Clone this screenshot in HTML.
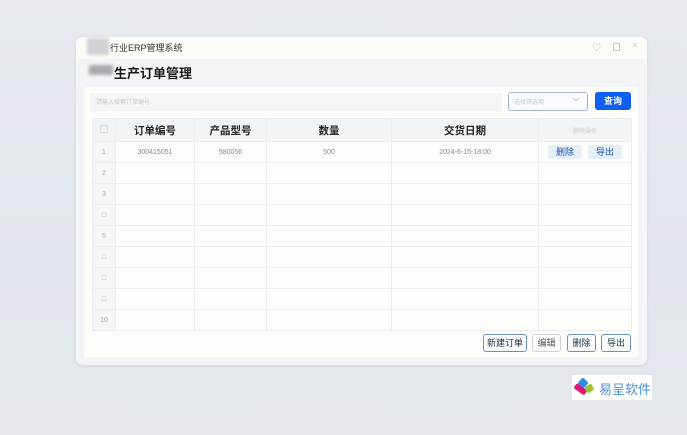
<!DOCTYPE html>
<html><head><meta charset="utf-8"><style>
*{box-sizing:border-box;margin:0;padding:0}
body{width:687px;height:435px;overflow:hidden;background:linear-gradient(180deg,#e6eaef,#e1e6ec 60%,#e4e8ed);font-family:"Liberation Sans","Noto Sans CJK SC",sans-serif;position:relative}
.win{position:absolute;left:76px;top:37px;width:571px;height:328px;background:#f2f4f6;border-radius:7px;box-shadow:0 1px 3px rgba(0,0,0,.08)}
.tb{position:absolute;left:0;top:0;width:571px;height:22px;background:#fafaf6;border-radius:7px 7px 0 0}
.blur{position:absolute;background:#cfd2d6;filter:blur(1.5px)}
.t{position:absolute;font-size:10px;color:#333;white-space:nowrap}
.panel{position:absolute;left:8px;top:50px;width:554px;height:270px;background:#fdfdf9;border-radius:3px}
.abs{position:absolute}
table{position:absolute;left:8px;top:31px;width:539px;border-collapse:collapse;table-layout:fixed}
td,th{border:1px solid #eceeee;height:21px;text-align:center;font-size:7px;color:#888}
th{height:23px;font-size:10.5px;color:#222;font-weight:bold;background:#f1f4f5}
td:first-child{background:#f5f7f7;color:#aaa}
.btn{position:absolute;top:247px;height:18px;border:1px solid #6e8fbe;border-radius:3px;font-size:9px;color:#234;text-align:center;line-height:16px;background:#fbfcfd}
.ab{display:inline-block;width:34px;height:14px;line-height:14px;background:#e6eef8;color:#1e56b0;font-size:9px;border-radius:2px;margin:0 3px}
</style></head><body>
<div class="win">
 <div class="tb"></div>
 <div class="blur" style="left:11px;top:1px;width:22px;height:17px"></div>
 <div class="t" style="left:34px;top:4px;font-size:9px">行业ERP管理系统</div>
 <div class="t" style="left:516px;top:4px;color:#bbb;font-size:9px">♡</div>
 <div class="abs" style="left:537px;top:6px;width:7px;height:8px;border:1px solid #ccc"></div>
 <div class="t" style="left:556px;top:3px;color:#ccc;font-size:10px">×</div>
 <div class="blur" style="left:13px;top:28px;width:24px;height:10px;background:#a8abaf"></div>
 <div class="t" style="left:38px;top:26px;font-size:13px;font-weight:bold;color:#1a1a1a">生产订单管理</div>
 <div class="panel">
  <div class="abs" style="left:6px;top:6px;width:412px;height:18px;background:#f4f6f6;border-radius:2px"></div>
  <div class="t" style="left:12px;top:10px;font-size:6px;color:#c4c8cc">请输入搜索订单编号</div>
  <div class="abs" style="left:424px;top:5px;width:80px;height:19px;border:1px solid #aab8cc;border-radius:3px;background:#f8fafc"></div>
  <div class="t" style="left:430px;top:10px;font-size:6px;color:#c4c8cc">选择筛选项</div>
  <div class="t" style="left:489px;top:7px;font-size:8px;color:#999">⌵</div>
  <div class="abs" style="left:511px;top:5px;width:36px;height:18px;background:#0f5ff0;border-radius:3px;color:#fff;font-size:9px;text-align:center;line-height:18px;font-weight:bold">查询</div>
  <table>
   <colgroup><col style="width:23px"><col style="width:79px"><col style="width:72px"><col style="width:125px"><col style="width:147px"><col style="width:93px"></colgroup>
   <tr><th><span style="display:inline-block;width:8px;height:8px;border:1px solid #ddd"></span></th><th>订单编号</th><th>产品型号</th><th>数量</th><th>交货日期</th><th style="font-size:6px;color:#ccc;font-weight:normal">删除操作</th></tr>
   <tr><td>1</td><td>300415051</td><td>580056</td><td>500</td><td>2024-6-15-18:00</td><td><span class="ab">删除</span><span class="ab">导出</span></td></tr>
   <tr><td>2</td><td></td><td></td><td></td><td></td><td></td></tr>
   <tr><td>3</td><td></td><td></td><td></td><td></td><td></td></tr>
   <tr><td>□</td><td></td><td></td><td></td><td></td><td></td></tr>
   <tr><td>5</td><td></td><td></td><td></td><td></td><td></td></tr>
   <tr><td>□</td><td></td><td></td><td></td><td></td><td></td></tr>
   <tr><td>□</td><td></td><td></td><td></td><td></td><td></td></tr>
   <tr><td>□</td><td></td><td></td><td></td><td></td><td></td></tr>
   <tr><td>10</td><td></td><td></td><td></td><td></td><td></td></tr>
  </table>
  <div class="btn" style="left:399px;width:44px">新建订单</div>
  <div class="btn" style="left:448px;width:29px;border-color:#cfd3d8;color:#555">编辑</div>
  <div class="btn" style="left:483px;width:29px">删除</div>
  <div class="btn" style="left:517px;width:30px">导出</div>
 </div>
</div>
<div class="abs" style="left:572px;top:375px;width:80px;height:25px;background:#fff"></div>
<svg class="abs" style="left:573px;top:378px" width="26" height="20" viewBox="0 0 26 20">
 <rect x="6" y="1" width="8" height="8" rx="2" transform="rotate(45 10 5)" fill="#2a8de0"/>
 <rect x="1" y="8" width="13" height="6" rx="2" transform="rotate(35 7 11)" fill="#e0187c"/>
 <rect x="12" y="7" width="8" height="7" rx="2" transform="rotate(-30 16 10)" fill="#9cc532"/>
</svg>
<div class="t" style="left:599px;top:379px;font-size:13px;color:#4a8fd8">易呈软件</div>
</body></html>
